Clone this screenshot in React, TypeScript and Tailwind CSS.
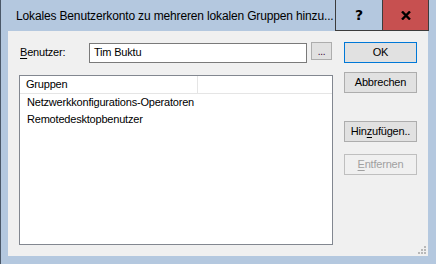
import React from "react";

function Btn({
  children,
  primary,
  disabled,
  className = "",
}: {
  children: React.ReactNode;
  primary?: boolean;
  disabled?: boolean;
  className?: string;
}) {
  const tone = disabled
    ? "border-[#bfbfbf] bg-[#f0f0f0] text-[#a0a0a0]"
    : primary
    ? "border-[#0078d7] bg-[#e1e1e1] text-black"
    : "border-[#adadad] bg-[#e1e1e1] text-black";
  return (
    <div
      className={`w-[73px] h-[21px] border flex items-center justify-center text-[11px] leading-none ${tone} ${className}`}
    >
      {children}
    </div>
  );
}

export default function App() {
  return (
    <div className="w-[436px] h-[264px] bg-[#b4c8df] border-l border-[#4b5868] flex flex-col font-['Liberation_Sans',Arial,sans-serif] tracking-[-0.2px] text-black">
      {/* Title bar */}
      <div className="h-[31px] flex shrink-0">
        <div className="flex-1 min-w-0 pl-[15px] flex items-center text-[12px] tracking-[-0.15px] whitespace-nowrap overflow-hidden">
          Lokales Benutzerkonto zu mehreren lokalen Gruppen hinzu...
        </div>
        <div className="w-[47px] h-[31px] border-l border-b border-[#3c3c3c] flex items-center justify-center text-[14px] font-bold font-['DejaVu_Sans',sans-serif]">
          ?
        </div>
        <div className="w-[47px] h-[31px] bg-[#c75050] border-x border-b border-[#3c3c3c] flex items-center justify-center">
          <svg width="10" height="9" viewBox="0 0 10 9">
            <path d="M1 0.5 L9 8.5 M9 0.5 L1 8.5" stroke="#000" strokeWidth="2.4" />
          </svg>
        </div>
        <div className="w-[7px]" />
      </div>

      {/* Client area */}
      <div className="ml-[7px] w-[420px] h-[225px] bg-[#f0f0f0] relative flex pt-[11px] pl-[11px]">
        {/* Left column */}
        <div className="w-[314px] flex flex-col">
          <div className="h-[21px] flex items-center">
            <div className="w-[70px] pl-[1px] text-[11px]">
              <span className="underline underline-offset-2">B</span>enutzer:
            </div>
            <div className="w-[218px] h-[20px] border border-[#7a7a7a] bg-white flex items-center pl-[4px] text-[11px]">
              Tim Buktu
            </div>
            <div className="ml-[4px] w-[21px] h-[18px] self-start border border-[#adadad] bg-[#e1e1e1] flex items-center justify-center text-[10px] text-[#330033]">
              ...
            </div>
          </div>

          <div className="mt-[12px] h-[170px] border border-[#828790] bg-white flex flex-col text-[11px]">
            <div className="flex h-[18px]">
              <div className="w-[178px] h-[18px] border-r border-b border-[#e5e5e5] flex items-center pl-[6px]">
                Gruppen
              </div>
              <div className="flex-1 border-b border-[#e5e5e5]" />
            </div>
            <div className="h-[17px] flex items-center pl-[7px]">
              Netzwerkkonfigurations-Operatoren
            </div>
            <div className="h-[17px] flex items-center pl-[7px]">
              Remotedesktopbenutzer
            </div>
          </div>
        </div>

        {/* Right column */}
        <div className="ml-[11px] flex flex-col">
          <Btn primary>OK</Btn>
          <Btn className="mt-[9px]">Abbrechen</Btn>
          <Btn className="mt-[28px]">
            <span>
              Hin<span className="underline underline-offset-2">z</span>ufügen..
            </span>
          </Btn>
          <Btn disabled className="mt-[12px]">
            <span>
              <span className="underline underline-offset-2">E</span>ntfernen
            </span>
          </Btn>
        </div>

        {/* Resize grip */}
        <svg
          className="absolute right-[1px] bottom-[1px]"
          width="10"
          height="10"
          viewBox="0 0 10 10"
        >
          <rect x="7" y="1" width="2" height="2" fill="#b8b8b8" />
          <rect x="4" y="4" width="2" height="2" fill="#b8b8b8" />
          <rect x="7" y="4" width="2" height="2" fill="#b8b8b8" />
          <rect x="1" y="7" width="2" height="2" fill="#b8b8b8" />
          <rect x="4" y="7" width="2" height="2" fill="#b8b8b8" />
          <rect x="7" y="7" width="2" height="2" fill="#b8b8b8" />
        </svg>
      </div>
    </div>
  );
}
